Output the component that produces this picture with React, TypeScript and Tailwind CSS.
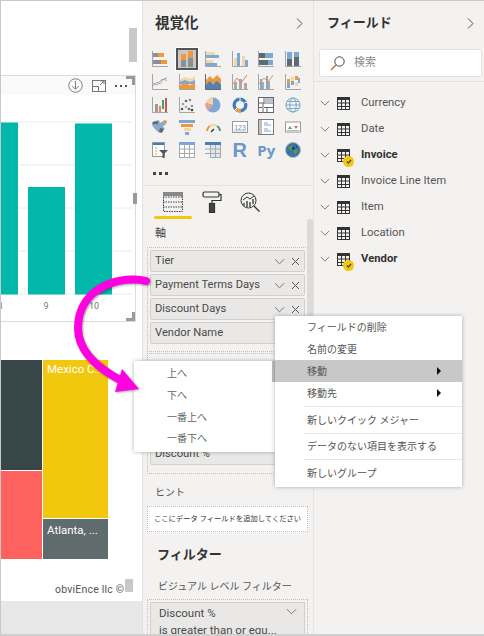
import type { ReactNode } from 'react'

const FONT = "font-['Roboto','Noto_Sans_CJK_JP',sans-serif]"

function Chevron({ className = '' }: { className?: string }) {
  return (
    <svg viewBox="0 0 12 7" className={className} fill="none" stroke="#6b6b6b" strokeWidth="1">
      <path d="M1 1l5 5 5-5" />
    </svg>
  )
}

function ChevronRight() {
  return (
    <svg viewBox="0 0 7 11" className="w-[7px] h-[11px]" fill="none" stroke="#555" strokeWidth="1">
      <path d="M1 .5l5 5-5 5" />
    </svg>
  )
}

function Cross() {
  return (
    <svg viewBox="0 0 9 9" className="w-[9px] h-[9px]" fill="none" stroke="#555" strokeWidth="1">
      <path d="M1 1l7 7M8 1l-7 7" />
    </svg>
  )
}

const O = '#ee9a3c'
const B = '#7da8d6'
const T = '#f3d6a8'
const G = '#8c9092'
const D = '#5f6a72'
const Axis = <path d="M.5 0v15.5H16" stroke="#a5a5a5" fill="none" />

function Ico({ children }: { children: ReactNode }) {
  return (
    <svg viewBox="0 0 16 16" className="w-4 h-4">
      {children}
    </svg>
  )
}

function rects(list: [number, number, number, number, string][]) {
  return list.map(([x, y, w, h, c], i) => <rect key={i} x={x} y={y} width={w} height={h} fill={c} />)
}

const vizIcons: ReactNode[] = [
  <Ico>{Axis}{rects([[1, 2, 5, 4, G], [6, 2, 6, 4, O], [1, 9, 8, 4, G], [9, 9, 6, 4, O]])}</Ico>,
  <div className="w-[22px] h-[22px] bg-[#c8c8c8] border-2 border-[#555] shadow-[0_0_0_1px_#fff] flex items-center justify-center">
    <svg viewBox="0 0 14 16" className="w-3.5 h-4">
      {rects([[1, 8, 5, 8, G], [1, 3, 5, 6, O], [8, 7, 5, 9, G], [8, 0, 5, 7, O]])}
    </svg>
  </div>,
  <Ico>{Axis}{rects([[1, 1, 9, 3, T], [1, 4, 13, 3, B], [1, 9, 7, 3, T], [1, 12, 11, 3, B]])}</Ico>,
  <Ico>{Axis}{rects([[2, 7, 3, 8, T], [5, 2, 3, 13, B], [10, 5, 3, 10, T], [13, 9, 3, 6, B]])}</Ico>,
  <Ico>{Axis}{rects([[1, 2, 6, 5, D], [7, 2, 8, 5, B], [1, 9, 9, 5, D], [10, 9, 5, 5, B]])}</Ico>,
  <Ico>{Axis}{rects([[2, 8, 5, 7, D], [2, 1, 5, 7, B], [9, 6, 5, 9, D], [9, 1, 5, 5, B]])}</Ico>,

  <Ico>{Axis}<path d="M1 12l4-4 3 2 4-5 3 2" stroke="#e4a07a" fill="none" /><path d="M1 9l4 2 4-5 6-2" stroke={B} fill="none" /></Ico>,
  <Ico>{Axis}<path d="M1 6l5-3 5 2 5-3v6H1z" fill={T} /><path d="M1 8l5-2 5 2 5-2v4H1z" fill={B} /><path d="M1 11l5-2 5 2 5-2v6H1z" fill={O} /></Ico>,
  <Ico><path d="M.5 0v15.5H16" stroke="#666" fill="none" /><path d="M1 6l4-4 3 3 4-4 4 4v4H1z" fill={O} /><path d="M1 10l4-3 3 3 4-3 4 3v5H1z" fill="#5b7fa8" /></Ico>,
  <Ico>{Axis}{rects([[2, 8, 3, 7, '#a9a9a9'], [7, 5, 3, 10, '#a9a9a9'], [12, 9, 3, 6, '#a9a9a9']])}<path d="M1 10l4-6 4 5 6-8" stroke="#e8805c" fill="none" /></Ico>,
  <Ico>{Axis}{rects([[2, 5, 2, 10, B], [4, 8, 2, 7, '#a9a9a9'], [8, 2, 2, 13, B], [10, 7, 2, 8, '#a9a9a9']])}<path d="M1 10l5-6 4 4 5-7" stroke={O} fill="none" /></Ico>,
  <Ico>{Axis}{rects([[2, 5, 3, 4, O], [2, 9, 3, 5, B], [6, 7, 3, 4, B], [6, 3, 3, 4, T], [10, 2, 3, 4, O], [10, 8, 3, 4, T], [13, 4, 2, 5, B]])}</Ico>,

  <Ico>{Axis}{rects([[3, 7, 3, 8, '#9a9a9a'], [7, 9, 2, 6, '#e8805c'], [10, 3, 2, 9, '#4f9a78'], [13, 1, 2, 14, '#c45a52']])}</Ico>,
  <Ico>{Axis}{([[4, 7, B], [7, 4, '#4d6f9a'], [11, 3, G], [3, 12, '#3d5f8a'], [7, 10, O], [10, 12, '#4d6f9a'], [13, 9, G], [13, 13, '#444']] as [number, number, string][]).map(([x, y, c], i) => <circle key={i} cx={x} cy={y} r="1.3" fill={c} />)}</Ico>,
  <Ico><circle cx="8" cy="8" r="7.5" fill={B} /><path d="M8 8V.5A7.5 7.5 0 0 0 .8 6z" fill={T} /><path d="M8 8L.8 6A7.5 7.5 0 0 0 3 13.6z" fill="#e8a08a" /></Ico>,
  <Ico><circle cx="8" cy="8" r="5.8" fill="none" stroke="#3f7cc0" strokeWidth="3.4" /><circle cx="8" cy="8" r="5.8" fill="none" stroke={O} strokeWidth="3.4" strokeDasharray="5 31.5" strokeDashoffset="-8" /><path d="M8 0v4M15 5l-3 1M2 14l3-3" stroke="#f3f2f1" strokeWidth="1" /></Ico>,
  <Ico><rect x=".5" y=".5" width="15" height="15" fill="#fff" stroke="#666" /><path d="M.5 6h15M6 .5V6M6 10.5h9.5M.5 10.5H4M9 10.5v5M5 6v10" stroke="#666" fill="none" />{rects([[7, 1, 8, 5, '#b8c4d0']])}</Ico>,
  <Ico><circle cx="8" cy="8" r="7" fill="none" stroke="#6fa8a0" strokeWidth="1" /><ellipse cx="8" cy="8" rx="3.2" ry="7" fill="none" stroke={B} /><path d="M1 8h14M2 4.5h12M2 11.5h12" stroke={B} /></Ico>,

  <Ico><path d="M0 3l7-2 1 3 5-3 2 2-2 3-2 1 2 3-3 1-2 3-3-2-3-3-2-3z" fill="#8aa9cc" /><path d="M1 3l5-1v3H1zM8 9l4 1-2 4-3-1z" fill="#5f6a72" /><path d="M12 1l3 1-1 3-2-1z" fill={O} /></Ico>,
  <Ico>{rects([[0, 1, 16, 3, B], [2, 5, 12, 3, O], [5, 9, 7, 3, T], [6, 13, 4, 3, B]])}</Ico>,
  <Ico><path d="M2 12a6.5 6.5 0 0 1 3-5" stroke={O} strokeWidth="2" fill="none" /><path d="M5.5 6.5a6.5 6.5 0 0 1 6 0" stroke={T} strokeWidth="2" fill="none" /><path d="M12 7a6.5 6.5 0 0 1 3 5" stroke="#4f9a78" strokeWidth="2" fill="none" /><path d="M6 13l3-3" stroke="#333" strokeWidth="1.4" /></Ico>,
  <Ico><rect x=".5" y="2.5" width="15" height="11" fill="#fff" stroke="#9a9a9a" /><text x="8" y="11" textAnchor="middle" fontSize="7" fill="#6f8fb0" fontFamily="Liberation Sans">123</text><path d="M2 12h12" stroke="#bbb" /></Ico>,
  <Ico><rect x=".5" y=".5" width="15" height="15" fill="#fff" stroke="#777" /><rect x="1" y="1" width="3" height="14" fill="#c0c0c0" /><path d="M6 4h4M6 6h7M6 10h4M6 12h7" stroke={B} /></Ico>,
  <Ico><rect x=".5" y="3" width="15" height="10" fill="#fff" stroke="#9a9a9a" /><path d="M3 10l2-3 2 3z" fill="#4f9a78" /><path d="M9 7h4l-2 3z" fill="#e0645a" /><path d="M2 11.5h12" stroke="#bbb" /></Ico>,

  <Ico><rect x=".5" y=".5" width="12" height="14" fill="#fff" stroke="#999" /><rect x="1" y="1" width="11" height="2" fill="#3f7cc0" /><path d="M3 6h2M3 9h2M3 12h2" stroke={O} /><path d="M7 8h9l-3.5 3.5V16h-2v-4.5z" fill="#555" /></Ico>,
  <Ico><rect x=".5" y=".5" width="15" height="15" fill="#fff" stroke="#aaa" /><rect x="0" y="0" width="16" height="3" fill={B} /><path d="M5.5 3v13M10.5 3v13M0 7h16M0 11.5h16" stroke="#aaa" /></Ico>,
  <Ico><rect x=".5" y=".5" width="15" height="15" fill="#dfe7ef" stroke="#aaa" /><rect x="0" y="0" width="16" height="3" fill="#4f7fb0" /><rect x="0" y="3" width="5" height="13" fill="#eef2f6" /><path d="M5.5 3v13M10.5 3v13M0 7h16M0 11.5h16" stroke="#aaa" /></Ico>,
  <span className="text-[20px] leading-none font-bold text-[#6d97c6] font-['Liberation_Sans',sans-serif]">R</span>,
  <span className="text-[15px] leading-none font-bold text-[#6d97c6] font-['Open_Sans',sans-serif]">Py</span>,
  <Ico><circle cx="8" cy="8" r="7.5" fill="#3a6fb0" stroke="#b5b5b5" /><path d="M3 5l4-2 1 3-3 3zM8 9l4-3 1 3-3 4zM5 11l2 1-1 2z" fill="#4f9a50" /><path d="M7 5l3 1-2 2zM11 4l1 1-1 1z" fill="#222" /></Ico>,
]

const fields = [
  { name: 'Currency' },
  { name: 'Date' },
  { name: 'Invoice', on: true },
  { name: 'Invoice Line Item' },
  { name: 'Item' },
  { name: 'Location' },
  { name: 'Vendor', on: true },
]

function TableIcon() {
  return (
    <svg viewBox="0 0 13 13" className="w-[13px] h-[13px]" fill="none">
      <rect x="0" y="0" width="13" height="3" fill="#333" />
      <rect x=".5" y=".5" width="12" height="12" stroke="#333" />
      <path d="M4.5 3v10M8.5 3v10M0 6h13M0 9.5h13" stroke="#333" />
    </svg>
  )
}

function Pill({ label, noActions }: { label: string; noActions?: boolean }) {
  return (
    <div className="h-[22px] bg-[#e9e8e6] border border-[#d2d1cf] rounded-[2px] flex items-center pl-1 pr-1 text-[11.2px] text-[#4a4a4a] shrink-0">
      <span className="flex-1 whitespace-nowrap">{label}</span>
      {!noActions && (
        <div className="flex items-center gap-[6px]">
          <Chevron className="w-[11px] h-[7px]" />
          <Cross />
        </div>
      )}
    </div>
  )
}

function Corner({ className }: { className: string }) {
  return <div className={`absolute w-[9px] h-[9px] border-[#9a9a9a] ${className}`} />
}

function Canvas() {
  const grid = [122, 165, 208, 251, 294]
  return (
    <div className="w-[143px] h-full shrink-0 bg-white border-r border-[#e2e2e2] flex flex-col relative">
      <div className="absolute left-[129px] top-[28px] w-2 h-[34px] bg-[#c8c8c8]" />
      <div className="mt-[75px] w-[136px] h-[247px] border-y border-r border-[#dcdcdc] relative shrink-0">
        <Corner className="right-0 top-0 border-t-[3px] border-r-[3px]" />
        <Corner className="right-0 bottom-0 border-b-[3px] border-r-[3px]" />
        <div className="absolute right-[-2px] top-[117px] w-1 h-[11px] bg-[#9a9a9a]" />
        <div className="h-[19px] bg-[#fafafa] flex items-center justify-end pr-[8px] gap-[9px]">
          <svg viewBox="0 0 16 16" className="w-[15px] h-[15px]" fill="none" stroke="#777">
            <circle cx="8" cy="8" r="7.2" />
            <path d="M8 3v9M4.5 8.5L8 12l3.5-3.5" />
          </svg>
          <svg viewBox="0 0 14 12" className="w-[14px] h-3" fill="none" stroke="#777">
            <rect x=".5" y=".5" width="13" height="11" />
            <path d="M.5 6.5h6v5M8 5l4-4M9 1h3v3" />
          </svg>
          <span className="flex gap-[3px]">
            <i className="w-[2px] h-[2px] bg-[#555]" />
            <i className="w-[2px] h-[2px] bg-[#555]" />
            <i className="w-[2px] h-[2px] bg-[#555]" />
          </span>
        </div>
        <svg viewBox="0 95 135 226" className="w-[135px] h-[226px]">
          {grid.map(y => (
            <line key={y} x1="0" x2="132" y1={y} y2={y} stroke="#ececec" />
          ))}
          <rect x="0" y="122.5" width="18" height="172" fill="#01b8aa" />
          <rect x="28" y="187" width="37" height="107.5" fill="#01b8aa" />
          <rect x="75" y="123.5" width="37" height="171" fill="#01b8aa" />
          <g fontSize="9" fill="#777" fontFamily="Roboto" textAnchor="middle">
            <text x="0" y="309">8</text>
            <text x="46" y="309">9</text>
            <text x="94" y="309">10</text>
          </g>
        </svg>
      </div>

      <div className="mt-[38px] w-[108px] h-[199px] flex gap-[1px] shrink-0">
        <div className="w-[42px] flex flex-col gap-[1px]">
          <div className="h-[110px] bg-[#374649]" />
          <div className="flex-1 bg-[#fd625e]" />
        </div>
        <div className="flex-1 flex flex-col gap-[1px]">
          <div className="h-[158px] bg-[#f2c80f] px-[4px] pt-[1px] text-[11.5px] leading-[16px] text-white whitespace-nowrap overflow-hidden">
            Mexico C...
          </div>
          <div className="flex-1 bg-[#5f6b6d] px-[4px] pt-[3px] text-[11.5px] leading-[16px] text-white whitespace-nowrap">
            Atlanta, ...
          </div>
        </div>
      </div>

      <div className="mt-[22px] pl-[55px] h-[18px] flex items-center text-[10.5px] tracking-[0.2px] text-[#555] whitespace-nowrap">
        obviEnce llc ©
      </div>
      <div className="absolute left-[125px] top-[579px] w-2 h-[13px] bg-[#c8c8c8]" />
      <div className="mt-auto h-[35px] bg-[#e7e7e7] shrink-0" />
    </div>
  )
}

function VizPanel() {
  return (
    <div className="w-[171px] h-full shrink-0 bg-[#f3f2f1] flex flex-col border-r border-[#e4e3e1] relative overflow-hidden">
      <div className="h-[48px] pl-[12px] pr-[10px] pb-[1px] flex items-center justify-between shrink-0">
        <span className="text-[14.5px] font-bold text-[#333]">視覚化</span>
        <ChevronRight />
      </div>
      <div className="pl-[4px] grid grid-cols-[repeat(6,26.5px)] auto-rows-[22.7px] items-center justify-items-center shrink-0">
        {vizIcons.map((icon, i) => (
          <div key={i} className="flex items-center justify-center">
            {icon}
          </div>
        ))}
      </div>
      <div className="h-[24px] pl-[10px] flex items-center gap-[3px] shrink-0">
        <i className="w-[3px] h-[3px] bg-[#444]" />
        <i className="w-[3px] h-[3px] bg-[#444]" />
        <i className="w-[3px] h-[3px] bg-[#444]" />
      </div>
      <div className="border-t border-[#e2e1df] h-[35px] relative shrink-0 flex pl-[20px] pt-[6px] gap-[19px]">
        <svg viewBox="0 0 20 20" className="w-5 h-5" fill="none" stroke="#444">
          <rect x=".5" y=".5" width="19" height="19" strokeDasharray="1.5 1" />
          <path d="M0 5h20M0 10h20M0 15h20" strokeDasharray="1.5 1" />
          <rect x="0" y="0" width="20" height="4" fill="#888" stroke="none" />
        </svg>
        <svg viewBox="0 0 20 22" className="w-5 h-[22px] -mt-[1px]" fill="none" stroke="#333" strokeWidth="1.2">
          <rect x="1" y="1" width="16" height="5" rx="1.5" />
          <path d="M17 3.5h2v6h-9v3" />
          <rect x="7.5" y="12.5" width="5" height="9" fill="#444" />
        </svg>
        <svg viewBox="0 0 20 20" className="w-5 h-5 ml-[-1px]" fill="none" stroke="#333">
          <circle cx="8.5" cy="8.5" r="7.5" />
          <path d="M14 14l5.5 5.5" strokeWidth="1.3" />
          <path d="M4 11v3M7 9v6M10 10v5M13 7v5" stroke="#555" strokeWidth="1.6" />
          <path d="M3 8l4-3 3 2 4-3" />
        </svg>
        <div className="absolute left-[11px] top-[30px] w-[38px] h-[3px] rounded-full bg-[#f2c80f]" />
      </div>
      <div className="absolute right-0 top-[219px] w-[6px] h-[110px] rounded-full bg-[#dcdbd9]" />

      <div className="h-[27px] pl-[12px] flex items-center text-[11px] text-[#444] shrink-0">軸</div>

      <div className="mx-[4px] w-[161px] h-[105px] border border-dotted border-[#bdbdbd] p-[2px] flex flex-col gap-[2px] shrink-0">
        <Pill label="Tier" />
        <Pill label="Payment Terms Days" />
        <Pill label="Discount Days" />
        <Pill label="Vendor Name" noActions />
      </div>

      <div className="h-[121px] mt-[1px] mx-[4px] w-[161px] border border-dotted border-[#bdbdbd] p-[2px] pb-[8px] flex flex-col justify-end shrink-0">
        <Pill label="Discount %" noActions />
      </div>

      <div className="h-[32px] pl-[12px] pt-[4px] flex items-center text-[10px] text-[#555] shrink-0">ヒント</div>

      <div className="mx-[4px] w-[161px] h-[26px] bg-white border border-dotted border-[#bdbdbd] flex items-center justify-center text-[7.3px] text-[#333] whitespace-nowrap shrink-0">
        ここにデータ フィールドを追加してください
      </div>

      <div className="h-[44px] pl-[14px] flex items-center text-[13px] font-bold text-[#333] shrink-0">フィルター</div>

      <div className="h-[20px] pl-[15px] pt-[1px] flex items-center text-[10px] text-[#555] whitespace-nowrap shrink-0">
        ビジュアル レベル フィルター
      </div>

      <div className="mt-[3px] mx-[4px] w-[161px] border border-dotted border-[#bdbdbd] p-[2px] shrink-0">
        <div className="h-[60px] bg-[#e9e8e6] border border-[#d2d1cf] px-[8px] pt-[2px] text-[11.5px] leading-[17px] text-[#4a4a4a] relative">
          Discount %
          <br />
          is greater than or equ...
          <Chevron className="absolute right-[7px] top-[5px] w-[11px] h-[7px]" />
        </div>
      </div>
    </div>
  )
}

function FieldsPanel() {
  return (
    <div className="flex-1 h-full bg-[#f3f2f1] flex flex-col">
      <div className="h-[46px] pl-[13px] pr-[10px] flex items-center justify-between shrink-0">
        <span className="text-[13px] font-bold text-[#333]">フィールド</span>
        <ChevronRight />
      </div>
      <div className="pl-[5px] pr-[2px] shrink-0">
        <div className="mt-[3px] h-[28px] bg-white border border-[#e4e3e1] rounded-[2px] flex items-center pl-[10px] gap-[9px] text-[11px] text-[#8a8a8a]">
          <svg viewBox="0 0 15 15" className="w-[15px] h-[15px]" fill="none">
            <circle cx="9.5" cy="5.5" r="4.7" stroke="#444" />
            <path d="M6 9l-5 5" stroke="#b06a3a" strokeWidth="1.2" />
          </svg>
          検索
        </div>
      </div>
      <div className="mt-[4px] border-t border-[#e2e1df] pt-[8px] shrink-0">
        {fields.map(f => (
          <div key={f.name} className="h-[26px] flex items-center pl-[6px]">
            <Chevron className="w-[10px] h-[6px]" />
            <div className="relative ml-[7px] mr-[11px]">
              <TableIcon />
              {f.on && (
                <div className="absolute left-[6px] top-[7px] w-[11px] h-[11px] rounded-full bg-[#f2c80f] flex items-center justify-center">
                  <svg viewBox="0 0 7 6" className="w-[6px] h-[5px]" fill="none" stroke="#333" strokeWidth="1.3">
                    <path d="M1 3l1.7 2L6 1" />
                  </svg>
                </div>
              )}
            </div>
            <span className={`text-[11.3px] ${f.on ? 'font-bold text-[#333]' : 'text-[#555]'}`}>{f.name}</span>
          </div>
        ))}
      </div>
    </div>
  )
}

function MenuRow({ label, active, arrow }: { label: string; active?: boolean; arrow?: boolean }) {
  return (
    <div className={`h-[22px] flex items-center pl-[32px] pr-[21px] justify-between ${active ? 'bg-[#c8c8c8]' : ''}`}>
      <span>{label}</span>
      {arrow && <i className="w-0 h-0 border-y-[4px] border-y-transparent border-l-[4px] border-l-[#111]" />}
    </div>
  )
}

function FieldMenu() {
  return (
    <div className="absolute left-[275px] top-[316px] w-[187px] bg-white shadow-[0_0_4px_rgba(0,0,0,0.3)] text-[10px] text-[#555] pb-[3px]">
      <MenuRow label="フィールドの削除" />
      <MenuRow label="名前の変更" />
      <MenuRow label="移動" active arrow />
      <MenuRow label="移動先" arrow />
      <div className="ml-[29px] border-t border-[#e6e6e6] mt-[2px] mb-[2px]" />
      <MenuRow label="新しいクイック メジャー" />
      <div className="ml-[29px] border-t border-[#e6e6e6] mt-[2px] mb-[1px]" />
      <MenuRow label="データのない項目を表示する" />
      <div className="ml-[29px] border-t border-[#e6e6e6] mt-[2px] mb-[2px]" />
      <MenuRow label="新しいグループ" />
    </div>
  )
}

function MoveMenu() {
  return (
    <div className="absolute left-[134px] top-[361px] w-[142px] h-[91px] bg-white shadow-[0_0_4px_rgba(0,0,0,0.3)] text-[10px] text-[#666] flex flex-col pt-[2px]">
      {['上へ', '下へ', '一番上へ', '一番下へ'].map(t => (
        <div key={t} className="h-[21.7px] pl-[33px] flex items-center shrink-0">
          {t}
        </div>
      ))}
      <div className="absolute right-0 top-0 w-[4px] h-[21px] bg-[#bdbdbd]" />
    </div>
  )
}

export default function App() {
  return (
    <div className={`${FONT} relative w-[484px] h-[636px] overflow-hidden flex`}>
      <Canvas />
      <VizPanel />
      <FieldsPanel />
      <div className="absolute left-0 right-0 top-0 h-[1px] bg-[#c8c8c8]" />
      <div className="absolute left-0 top-0 bottom-0 w-[1px] bg-[#c8c8c8]" />
      <div className="absolute left-0 right-0 bottom-0 h-[2px] bg-[#d0d0d0]" />
      <MoveMenu />
      <FieldMenu />
      <svg className="absolute left-0 top-0 w-[484px] h-[636px] pointer-events-none drop-shadow-[1px_1px_1px_rgba(0,0,0,0.35)]" viewBox="0 0 484 636" fill="none">
        <path d="M146 281C125 275 78 285 78 328C78 350 95 367 122 381" stroke="#ff00e1" strokeWidth="8" strokeLinecap="round" />
        <path d="M122 369L139 389L115 392Z" fill="#ff00e1" />
      </svg>
    </div>
  )
}
